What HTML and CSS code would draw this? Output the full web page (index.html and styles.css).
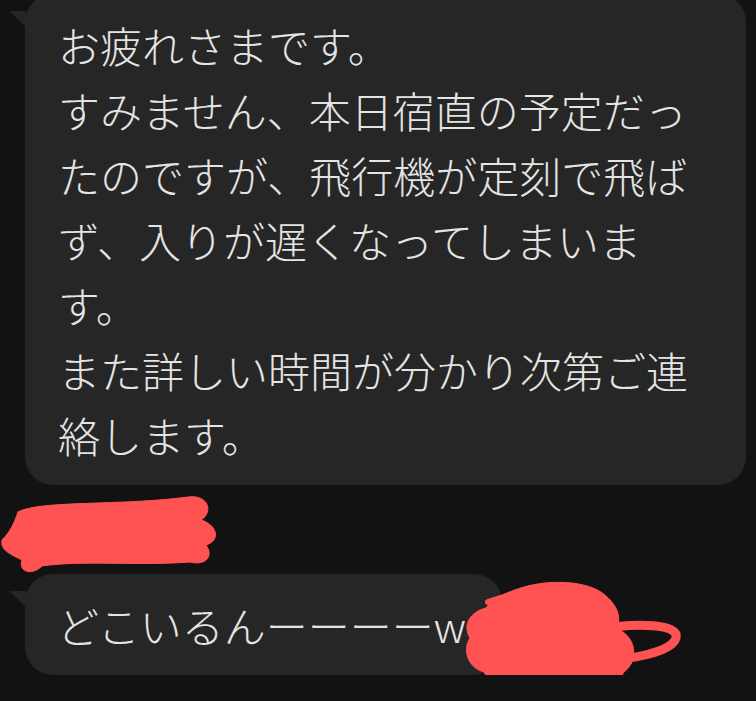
FILE: index.html
```html
<!DOCTYPE html>
<html lang="ja">
<head>
    <meta charset="UTF-8">
    <meta name="viewport" content="width=device-width, initial-scale=1.0">
    <title>トーク</title>
    <link rel="stylesheet" href="styles.css">
</head>
<body>
    <div class="chat">
        <div class="bubble bubble-long">
            お疲れさまです。<br>
            すみません、本日宿直の予定だったのですが、飛行機が定刻で飛ばず、入りが遅くなってしまいます。<br>
            また詳しい時間が分かり次第ご連絡します。
        </div>

        <!-- 送信者名（塗りつぶし） -->
        <div class="sender">
            <svg class="scribble" width="230" height="89" viewBox="0 485 230 89">
                <path d="M18,512 C40,500 120,506 188,497 C208,494 214,512 201,520 C216,524 222,540 206,545 C214,556 206,566 190,562 C140,566 80,560 42,566 C32,576 18,572 22,560 C10,554 0,550 2,540 C10,532 14,524 18,512 Z"/>
            </svg>
        </div>

        <div class="row">
            <div class="bubble bubble-short">どこいるんーーーーw</div>
            <!-- 時刻（塗りつぶし） -->
            <svg class="scribble scribble-time" width="230" height="125" viewBox="455 575 230 125">
                <path d="M515,590 C545,578 590,580 606,596 C618,606 622,620 616,628 C636,636 640,660 624,672 C616,688 585,696 555,694 C525,696 492,690 484,672 C468,668 462,650 470,638 C462,625 470,612 486,608 C492,600 502,594 515,590 Z"/>
                <path d="M590,630 C640,622 680,624 676,638 C672,652 632,660 590,662" fill="none" stroke-width="9"/>
                <path d="M488,602 C520,590 560,588 590,600" fill="none" stroke-width="6"/>
            </svg>
        </div>
    </div>
</body>
</html>
```

FILE: styles.css
```css
/* General */
body {
    margin: 0;
    padding: 0;
    background-color: #121212;
    font-family: "Noto Sans CJK JP", "Noto Sans", sans-serif;
    font-weight: 300;
    color: #e4e4e4;
    overflow: hidden;
}

.chat {
    padding: 0 10px 0 25px;
    margin-top: -6px;
}

/* Bubbles */
.bubble {
    position: relative;
    background: #262626;
    border-radius: 28px;
    padding: 18px 33px;
    font-size: 42px;
    line-height: 65px;
}

.bubble::before {
    content: "";
    position: absolute;
    left: -16px;
    top: 17px;
    width: 17px;
    height: 16px;
    background: #262626;
    clip-path: polygon(0 0, 100% 0, 100% 100%);
}

.bubble-short {
    width: fit-content;
    padding: 18px 36px 18px 32px;
}

/* Sender row */
.sender {
    height: 89px;
    margin-left: -25px;
}

.scribble {
    display: block;
    fill: #ff5353;
    stroke: #ff5353;
    stroke-linejoin: round;
    stroke-linecap: round;
}

.row {
    position: relative;
}

.scribble-time {
    position: absolute;
    left: 430px;
    top: 1px;
}
```
